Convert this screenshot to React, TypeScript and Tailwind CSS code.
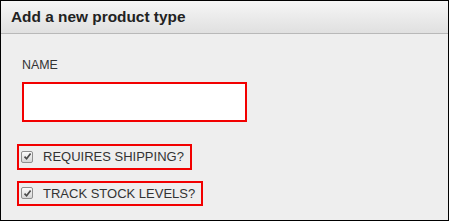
import type { ReactNode } from 'react';

function CheckMark() {
  // old-style gray checkbox, checked
  return (
    <span className="flex h-[12px] w-[12px] flex-shrink-0 items-center justify-center rounded-[2px] border border-[#8f8f8f] bg-gradient-to-b from-[#fcfcfc] to-[#d6d6d6]">
      <svg width="9" height="9" viewBox="0 0 9 9">
        <path d="M1.5 4.6 L3.6 6.8 L7.6 1.6" fill="none" stroke="#4a4a4a" strokeWidth="1.7" />
      </svg>
    </span>
  );
}

function CheckRow({ children }: { children: ReactNode }) {
  return (
    <label className="flex items-center gap-[10px] self-start border-2 border-[#f20000] pl-[2px] pr-[6px]">
      <CheckMark />
      <span className="text-[13px] leading-[21.5px] text-[#333]">{children}</span>
    </label>
  );
}

export default function App() {
  return (
    <div className="h-[221px] w-[449px] border border-black bg-[#eeeeee] font-['Liberation_Sans',Arial,sans-serif]">
      <div className="flex h-[33px] items-center border-b border-[#b8b8b8] bg-gradient-to-b from-[#f6f6f6] to-[#e0e0e0] pl-[10px]">
        <h1 className="text-[15.4px] font-bold text-[#222]">Add a new product type</h1>
      </div>

      <div className="flex flex-col pl-[16px] pt-[24px]">
        <p className="ml-[5px] text-[12.4px] leading-[14px] text-[#333]">NAME</p>
        <input
          type="text"
          className="ml-[5px] mt-[10px] h-[40px] w-[225px] border-2 border-[#f20000] bg-white outline-none"
        />
        <div className="mt-[22px] flex flex-col gap-[11px]">
          <CheckRow>REQUIRES SHIPPING?</CheckRow>
          <CheckRow>TRACK STOCK LEVELS?</CheckRow>
        </div>
      </div>
    </div>
  );
}
